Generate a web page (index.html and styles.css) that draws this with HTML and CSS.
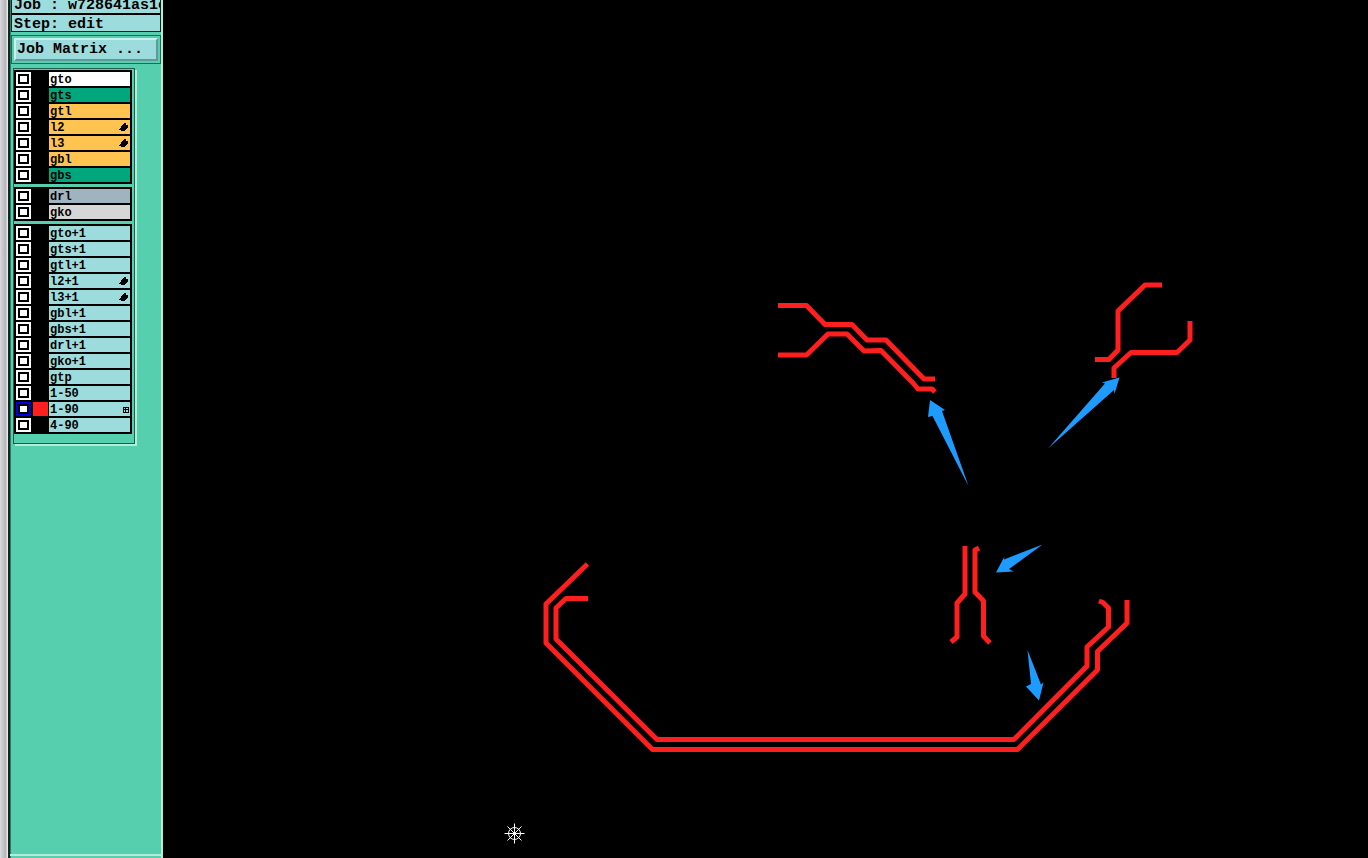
FILE: index.html
```html
<!DOCTYPE html>
<html lang="en">

<head>
    <meta charset="UTF-8">
    <title>Graphic Editor</title>
    <link rel="stylesheet" href="styles.css">
</head>

<body>
    <div class="edge"></div>
    <aside class="side">
        <div class="info">
            <div class="job">Job : w728641as1e</div>
            <div class="step">Step: edit</div>
        </div>
        <div class="matrix">
            <button class="matrix-btn">Job Matrix ...</button>
        </div>
        <div class="layers">
            <div class="layer-box">
                <ul class="group">
                    <li class="row"><span class="check"></span><span class="swatch"></span><span class="name white">gto</span></li>
                    <li class="row"><span class="check"></span><span class="swatch"></span><span class="name green">gts</span></li>
                    <li class="row"><span class="check"></span><span class="swatch"></span><span class="name orange">gtl</span></li>
                    <li class="row"><span class="check"></span><span class="swatch"></span><span class="name orange">l2<svg class="hand" viewBox="0 0 9 9"><path d="M5 0h2v2h2v3H8v1H7v1H6v1H2V7H0V6h1V5h1V3h1V2h1V1h1z"/></svg></span></li>
                    <li class="row"><span class="check"></span><span class="swatch"></span><span class="name orange">l3<svg class="hand" viewBox="0 0 9 9"><path d="M5 0h2v2h2v3H8v1H7v1H6v1H2V7H0V6h1V5h1V3h1V2h1V1h1z"/></svg></span></li>
                    <li class="row"><span class="check"></span><span class="swatch"></span><span class="name orange">gbl</span></li>
                    <li class="row"><span class="check"></span><span class="swatch"></span><span class="name green">gbs</span></li>
                </ul>
                <ul class="group">
                    <li class="row"><span class="check"></span><span class="swatch"></span><span class="name slate">drl</span></li>
                    <li class="row"><span class="check"></span><span class="swatch"></span><span class="name silver">gko</span></li>
                </ul>
                <ul class="group">
                    <li class="row"><span class="check"></span><span class="swatch"></span><span class="name">gto+1</span></li>
                    <li class="row"><span class="check"></span><span class="swatch"></span><span class="name">gts+1</span></li>
                    <li class="row"><span class="check"></span><span class="swatch"></span><span class="name">gtl+1</span></li>
                    <li class="row"><span class="check"></span><span class="swatch"></span><span class="name">l2+1<svg class="hand" viewBox="0 0 9 9"><path d="M5 0h2v2h2v3H8v1H7v1H6v1H2V7H0V6h1V5h1V3h1V2h1V1h1z"/></svg></span></li>
                    <li class="row"><span class="check"></span><span class="swatch"></span><span class="name">l3+1<svg class="hand" viewBox="0 0 9 9"><path d="M5 0h2v2h2v3H8v1H7v1H6v1H2V7H0V6h1V5h1V3h1V2h1V1h1z"/></svg></span></li>
                    <li class="row"><span class="check"></span><span class="swatch"></span><span class="name">gbl+1</span></li>
                    <li class="row"><span class="check"></span><span class="swatch"></span><span class="name">gbs+1</span></li>
                    <li class="row"><span class="check"></span><span class="swatch"></span><span class="name">drl+1</span></li>
                    <li class="row"><span class="check"></span><span class="swatch"></span><span class="name">gko+1</span></li>
                    <li class="row"><span class="check"></span><span class="swatch"></span><span class="name">gtp</span></li>
                    <li class="row"><span class="check"></span><span class="swatch"></span><span class="name">1-50</span></li>
                    <li class="row"><span class="check active"></span><span class="swatch red"></span><span class="name">1-90<svg class="grid" viewBox="0 0 6 6"><path d="M0 0h6v6H0zM1 1v1h1V1zM3 1v1h2V1zM1 3v2h1V3zM3 3v2h2V3z" fill-rule="evenodd"/></svg></span></li>
                    <li class="row"><span class="check"></span><span class="swatch"></span><span class="name">4-90</span></li>
                </ul>
            </div>
        </div>
        <div class="side-foot"></div>
    </aside>
    <main class="canvas">
        <svg class="board" viewBox="163 0 1205 858">
            <g class="traces">
                <polyline points="778,305.5 806.5,305.5 825,324.5 852,324.5 867,340 886,340 924,379 935,379"/>
                <polyline points="778,355 806.5,355 828,334 847,334 864,351 881,350.5 913,383 918,389 932,389 935,392"/>
                <polyline points="1162,285 1145,285 1118,311 1118,350 1109,359.5 1095,359.5"/>
                <polyline points="1190,321 1190,340 1177,352.5 1131,352.5 1114,368 1114,378"/>
                <polyline points="965,546 965,594 957,603 957,637 951,642"/>
                <polyline points="979,548 975,550 975,592 983.5,601 983.5,636 990,643"/>
                <polyline points="587.5,564 546,604 546,643 652.5,749.5 1017.5,749.5 1097.5,670 1097.5,651.5 1127,623 1127,600"/>
                <polyline points="588,598.5 566,598.5 556,608 556,639 657,739.5 1014,739.5 1087,666 1087,647 1108.5,627 1108.5,608 1103,602.5 1099,601"/>
            </g>
            <g class="arrows">
                <polygon points="930,400 945,410 942,411 968.5,486 932.5,416 928,417"/>
                <polygon points="1119.5,377.5 1114.5,394 1114,390 1048,448.5 1105,383.5 1102,382.5"/>
                <polygon points="996,572.5 1004.5,556.5 1004,559.5 1042.5,544.5 1009,569 1013.5,571.5"/>
                <polygon points="1039,700.5 1026,686.5 1031,684 1027.5,650 1041,684.5 1043.5,682.5"/>
            </g>
            <g class="origin">
                <circle cx="514.5" cy="833.5" r="6"/>
                <path d="M514.5 823.5v20M504.5 833.5h20M507.5 826.5l14 14M521.5 826.5l-14 14"/>
            </g>
        </svg>
    </main>
</body>

</html>
```

FILE: styles.css
```css
* {
    padding: 0;
    margin: 0;
    box-sizing: border-box;
}

body {
    display: flex;
    width: 1368px;
    height: 858px;
    overflow: hidden;
    background: #000;
    font-family: "Liberation Mono", monospace;
    color: #000;
}

.edge {
    width: 8px;
    background: linear-gradient(to right, #dcdce0 0, #c4c4c8 3px, #b4b4b8 6px, #e8e8e8 7px);
}

.side {
    display: flex;
    flex-direction: column;
    width: 155px;
    background: #56cfae;
    border-left: 2px solid #0c2a22;
    border-right: 2px solid #b5ecd8;
    box-shadow: inset 1px 0 0 #2f7a66;
}

.info {
    margin-left: 1px;
    border: 1px solid #08251e;
    border-top: 0;
    background: #9cdcdc;
    font-size: 15px;
    font-weight: bold;
}

.job {
    height: 15px;
    padding: 0 0 0 2px;
    overflow: hidden;
    white-space: nowrap;
    border-bottom: 2px solid #000;
    display: flex;
    align-items: flex-end;
    line-height: 14px;
}

.step {
    height: 16px;
    padding-left: 2px;
    line-height: 19px;
}

.matrix {
    margin: 3px 0 0 1px;
    height: 29px;
    padding: 2px;
    border: 1px solid #1f6b57;
}

.matrix-btn {
    display: block;
    width: 100%;
    height: 23px;
    padding-left: 1px;
    text-align: left;
    background: #9cdcdc;
    font-family: inherit;
    font-size: 15px;
    font-weight: bold;
    color: #000;
    border: 2px solid;
    border-color: #c9f1f1 #5f9a9a #5f9a9a #c9f1f1;
}

.layers {
    height: 382px;
    padding: 4px 0 0 3px;
}

.layer-box {
    display: flex;
    flex-direction: column;
    gap: 3px;
    width: 122px;
    height: 376px;
    padding: 1px 2px 9px 0;
    border: 1px solid #1f5f50;
    box-shadow: 2px 2px 0 #b5ecd8;
}

.group {
    display: flex;
    flex-direction: column;
    gap: 2px;
    padding: 2px;
    background: #000;
    list-style: none;
}

.row {
    display: flex;
    gap: 2px;
    height: 14px;
}

.check {
    width: 15px;
    height: 14px;
    background: #fff;
    padding: 2px;
    display: flex;
}

.check::after {
    content: "";
    flex: 1;
    background: #fff;
    border: 2px solid #000;
}

.check.active {
    background: #0000e0;
}

.swatch {
    width: 15px;
    margin-right: -1px;
}

.red {
    background: #ff1f1f;
}

.name {
    display: flex;
    align-items: center;
    width: 81px;
    padding: 2px 1px 0;
    background: #9cdcdc;
    font-size: 12px;
    font-weight: bold;
    line-height: 12px;
}

.white {
    background: #fff;
}

.green {
    background: #00a67c;
}

.orange {
    background: #ffc44f;
}

.slate {
    background: #9fb4bf;
}

.silver {
    background: #d6d6d6;
}

.hand {
    width: 9px;
    height: 9px;
    margin: -1px 1px 0 auto;
}

.grid {
    width: 6px;
    height: 6px;
    margin: 0 0 0 auto;
}

.side-foot {
    flex: 1;
    margin-bottom: 2px;
    border-bottom: 2px solid #b5ecd8;
}

.canvas {
    flex: 1;
    background: #000;
}

.board {
    display: block;
    width: 1205px;
    height: 858px;
}

.traces polyline {
    fill: none;
    stroke: #ff1f1f;
    stroke-width: 5;
    stroke-linejoin: round;
}

.arrows polygon {
    fill: #1e9bff;
}

.origin {
    fill: none;
    stroke: #fff;
    stroke-width: 1;
}
```
